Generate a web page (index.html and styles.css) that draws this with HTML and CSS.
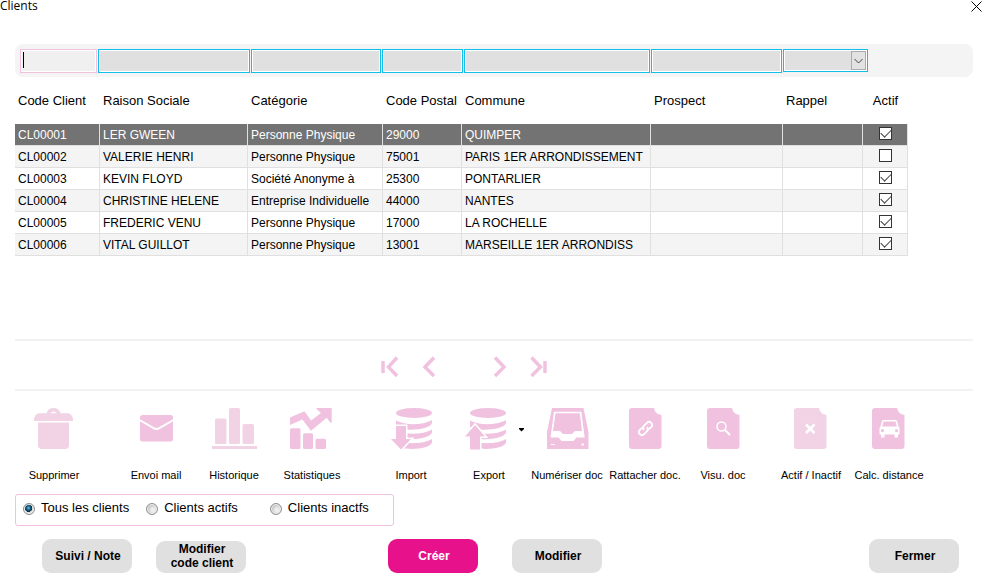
FILE: index.html
```html
<!DOCTYPE html>
<html lang="fr">
<head>
<meta charset="utf-8">
<title>Clients</title>
<link rel="stylesheet" href="styles.css">
</head>
<body>
<svg class="defs" aria-hidden="true">
  <symbol id="doc" viewBox="0 0 42 42"><path d="M8 0H30Q31 6 37.500 7V38Q37.500 41 34.500 41H8Q5 41 5 38V3Q5 0 8 0Z"/></symbol>
  <symbol id="discs" viewBox="0 0 42 42">
    <ellipse cx="24" cy="5" rx="18" ry="5"/>
    <path d="M6 12.500C15 17.500 33 17.500 42 12V15C40 22.500 13 23.500 6 19Z"/>
    <path d="M6 22C15 27 33 27 42 21.500V24.500C40 32 13 33 6 28.500Z"/>
    <path d="M6 31.500C15 36.500 33 36.500 42 31V34.500C40 42 13 42.500 6 38Z"/>
  </symbol>
</svg>

<header class="titlebar">
  <h1>Clients</h1>
  <button class="close" type="button" aria-label="Quitter"><svg width="11" height="11" viewBox="0 0 11 11"><path d="M.5 .5L10.500 10.500M10.500 .5L.5 10.500"/></svg></button>
</header>

<main>
  <form class="filters">
    <span class="field current"><input type="text" aria-label="Code Client"></span>
    <span class="field"><input type="text" aria-label="Raison Sociale"></span>
    <span class="field"><input type="text" aria-label="Catégorie"></span>
    <span class="field"><input type="text" aria-label="Code Postal"></span>
    <span class="field"><input type="text" aria-label="Commune"></span>
    <span class="field"><input type="text" aria-label="Prospect"></span>
    <span class="field choice"><select aria-label="Rappel"><option></option></select><svg width="15" height="19" viewBox="0 0 15 19"><rect x=".5" y=".5" width="14" height="18"/><path d="M3.500 8L7.500 12L11.500 8"/></svg></span>
  </form>

  <div class="list">
    <table>
      <colgroup><col class="code"><col class="name"><col class="category"><col class="postal"><col class="town"><col class="prospect"><col class="reminder"><col class="active"></colgroup>
      <thead><tr><th>Code Client</th><th>Raison Sociale</th><th>Catégorie</th><th>Code Postal</th><th>Commune</th><th>Prospect</th><th>Rappel</th><th>Actif</th></tr></thead>
      <tbody>
        <tr class="selected"><td>CL00001</td><td>LER GWEEN</td><td>Personne Physique</td><td>29000</td><td>QUIMPER</td><td></td><td></td><td><input type="checkbox" aria-label="Actif CL00001" checked></td></tr>
        <tr><td>CL00002</td><td>VALERIE HENRI</td><td>Personne Physique</td><td>75001</td><td>PARIS 1ER ARRONDISSEMENT</td><td></td><td></td><td><input type="checkbox" aria-label="Actif CL00002"></td></tr>
        <tr><td>CL00003</td><td>KEVIN FLOYD</td><td>Société Anonyme à</td><td>25300</td><td>PONTARLIER</td><td></td><td></td><td><input type="checkbox" aria-label="Actif CL00003" checked></td></tr>
        <tr><td>CL00004</td><td>CHRISTINE HELENE</td><td>Entreprise Individuelle</td><td>44000</td><td>NANTES</td><td></td><td></td><td><input type="checkbox" aria-label="Actif CL00004" checked></td></tr>
        <tr><td>CL00005</td><td>FREDERIC VENU</td><td>Personne Physique</td><td>17000</td><td>LA ROCHELLE</td><td></td><td></td><td><input type="checkbox" aria-label="Actif CL00005" checked></td></tr>
        <tr><td>CL00006</td><td>VITAL GUILLOT</td><td>Personne Physique</td><td>13001</td><td>MARSEILLE 1ER ARRONDISS</td><td></td><td></td><td><input type="checkbox" aria-label="Actif CL00006" checked></td></tr>
      </tbody>
    </table>
  </div>

  <nav class="pager" aria-label="Navigation">
    <button type="button" aria-label="Premier"><svg width="18" height="22" viewBox="0 0 18 22"><path d="M2 5V17M16 1.500L7.500 11L16 20"/></svg></button>
    <button type="button" aria-label="Précédent"><svg width="18" height="22" viewBox="0 0 18 22"><path d="M14 1.500L5 11L14 20"/></svg></button>
    <button class="next" type="button" aria-label="Suivant"><svg width="18" height="22" viewBox="0 0 18 22"><path d="M4 1.500L13 11L4 20"/></svg></button>
    <button type="button" aria-label="Dernier"><svg width="18" height="22" viewBox="0 0 18 22"><path d="M1.500 1.500L10.500 11L1.500 20M15 5V17"/></svg></button>
  </nav>

  <div class="toolbar">
    <div class="tools">
      <button class="off" type="button"><svg viewBox="0 0 42 42"><path d="M1 13V11Q2 5.300 7 5.300H13.500Q15 0 20.500 0Q26 0 27.500 5.300H34Q39 5.300 40 11V13Z"/><path class="cut" d="M17 5.300Q20.500 1.500 24 5.300Z"/><path d="M5 14.500H36V37Q36 41 32 41H9Q5 41 5 37Z"/></svg>Supprimer</button>
    </div>
    <div class="tools">
      <button type="button"><svg viewBox="0 0 42 42"><rect x="5" y="7" width="33" height="26.500" rx="2.500"/><path class="line" d="M4.500 12L19.500 20.500Q21.500 21.500 23.500 20.500L38.500 12"/></svg>Envoi mail</button>
      <button class="off" type="button"><svg viewBox="0 0 42 42"><rect x="2" y="10.500" width="11.500" height="25.500" rx="1.500"/><rect x="16" y="0" width="11" height="36" rx="1.500"/><rect x="29.500" y="16" width="11.500" height="20" rx="1.500"/><path d="M-1 38H44V41H-1Z"/></svg>Historique</button>
      <button type="button"><svg viewBox="0 0 42 42"><path d="M-1 9.500L13.500 3.300L20 12.500L30 5L25.500 1V0H40.700V14.700H39.500L35.700 9.700L20 22.700L11.300 11.500L-1 17Z"/><rect x="-1" y="20.300" width="10.500" height="20.700" rx="1.500"/><rect x="12" y="25.300" width="10" height="15.700" rx="1.500"/><rect x="24.500" y="30.700" width="10.500" height="10.300" rx="1.500"/></svg>Statistiques</button>
    </div>
    <div class="tools">
      <button type="button"><svg viewBox="0 0 42 42"><use href="#discs" width="42" height="42"/><path class="edge" d="M6 18H16V31H21L11 41.500L1 31H6Z"/></svg>Import</button>
      <button type="button"><svg viewBox="0 0 42 42"><use href="#discs" x="-4" width="42" height="42"/><path class="edge" d="M7 17L17 28.500H12V41.500H2V28.500H-3Z"/><path class="arrow" d="M51 20H56V21L53.500 23.500L51 21Z"/></svg>Export</button>
      <button type="button"><svg viewBox="0 0 42 42"><path d="M6 0H37.500L42.500 24V41H1V24Z"/><path class="cut" d="M8 3.700H35.300L38.700 29.500H30.500L27.500 33H15.500L12.500 29.500H4.500Z"/><path d="M9.500 5.200H33.800L36 23H29L26 26H17L14 23H7Z"/><path class="cut" d="M5 36H9V37H5ZM35.500 35.500H38V37.500H35.500Z"/></svg>Numériser doc</button>
      <button type="button"><svg viewBox="0 0 42 42"><use href="#doc" width="42" height="42"/><g class="link" transform="rotate(-45 21.500 20.500)"><path d="M19.500 17.500H16.500Q13.500 17.500 13.500 20.500Q13.500 23.500 16.500 23.500H20.500Q23.500 23.500 23.500 20.500M23.500 23.500H26.500Q29.500 23.500 29.500 20.500Q29.500 17.500 26.500 17.500H22.500Q19.500 17.500 19.500 20.500"/></g></svg>Rattacher doc.</button>
      <button type="button"><svg viewBox="0 0 42 42"><use href="#doc" width="42" height="42"/><circle class="thin" cx="19.500" cy="18.500" r="4.500"/><path class="line" d="M23 22L28 27"/></svg>Visu. doc</button>
    </div>
    <div class="tools">
      <button class="off" type="button"><svg viewBox="0 0 42 42"><use href="#doc" x="-1" width="42" height="42"/><path class="cross" d="M16 16.500L24.500 25M24.500 16.500L16 25"/></svg>Actif / Inactif</button>
      <button type="button"><svg viewBox="0 0 42 42"><use href="#doc" x="-1" width="42" height="42"/><path class="cut" fill-rule="evenodd" d="M15.500 12H27.500Q28.500 12 29 13L30.500 18.500Q31.500 19 31.500 20.500V26.500H30V29.500H26.500V26.500H16.500V29.500H13V26.500H11.500V20.500Q11.500 19 12.500 18.500L14 13Q14.500 12 15.500 12ZM15.500 13.500L14.200 18.500H28.800L27.500 13.500ZM14.500 21A1.600 1.600 0 1 0 14.500 24.200A1.600 1.600 0 1 0 14.500 21ZM28.500 21A1.600 1.600 0 1 0 28.500 24.200A1.600 1.600 0 1 0 28.500 21Z"/></svg>Calc. distance</button>
    </div>
  </div>

  <fieldset class="scope" aria-label="Clients affichés">
    <label><input type="radio" name="scope" checked>Tous les clients</label>
    <label><input type="radio" name="scope">Clients actifs</label>
    <label><input type="radio" name="scope">Clients inactfs</label>
  </fieldset>
</main>

<footer class="actions">
  <button type="button">Suivi / Note</button>
  <button class="two-lines" type="button">Modifier<br>code client</button>
  <button class="create" type="button">Créer</button>
  <button class="edit" type="button">Modifier</button>
  <button class="leave" type="button">Fermer</button>
</footer>
</body>
</html>
```
FILE: styles.css
```css
:root {
  --pink: #f0c2df;
  --pink-off: #f1d3e5;
  --blue: #0fc0ea;
  --grey: #e0e0e0;
  --pale: #f4f4f4;
}
* { box-sizing: border-box; }
body {
  margin: 0;
  min-height: 100vh;
  display: flex;
  flex-direction: column;
  background: #fff;
  color: #000;
  font: 13px/16px "Liberation Sans", Arial, sans-serif;
}
button, input, select { font: inherit; color: inherit; }
button { padding: 0; border: 0; background: none; }
svg { display: block; }
.defs { position: absolute; width: 0; height: 0; }

.titlebar {
  display: flex;
  justify-content: space-between;
  align-items: flex-start;
  height: 44px;
  padding-right: 6px;
}
h1 { margin: 0; font: 12px/12px "Open Sans", "Noto Sans", sans-serif; }
.close { padding-top: 1px; }
.close path { stroke: #000; fill: none; }

main {
  flex: 1;
  display: flex;
  flex-direction: column;
  margin: 0 15px;
}

.filters {
  display: grid;
  grid-template-columns: 77px 152px 130px 81px 186px 131px 85px;
  gap: 1px;
  padding: 5px 5px 4px;
  border-radius: 8px;
  background: var(--pale);
}
.field { position: relative; display: flex; height: 24px; }
.field input, .field select {
  width: 100%;
  height: 100%;
  margin: 0;
  padding: 0 4px;
  border: 1px solid var(--blue);
  border-radius: 0;
  outline: 0;
  background: var(--grey);
  box-shadow: inset 0 0 0 1px #fff;
  appearance: none;
}
.current input { border-color: var(--pink); background: #f0f0f0; }
.current::after {
  content: "";
  position: absolute;
  left: 3px;
  top: 3px;
  width: 1px;
  height: 16px;
  background: #000;
}
.choice { height: 23px; }
.choice svg { position: absolute; right: 2px; top: 2px; pointer-events: none; }
.choice rect { fill: #e2e2e2; stroke: #acacac; }
.choice path { fill: none; stroke: #444; }

.list { flex: 1; }
table { table-layout: fixed; width: 893px; border-collapse: separate; border-spacing: 0; }
.code { width: 85px; }
.name { width: 148px; }
.category { width: 135px; }
.postal { width: 79px; }
.town { width: 189px; }
.prospect { width: 132px; }
.reminder { width: 80px; }
.active { width: 45px; }
th, td { padding: 0 3px; text-align: left; white-space: nowrap; }
th { height: 47px; font-weight: 400; }
td {
  height: 22px;
  border-right: 1px solid var(--grey);
  border-bottom: 1px solid var(--grey);
  font-size: 12px;
  overflow: hidden;
}
th:last-child, td:last-child { text-align: center; }
tbody tr:nth-child(even) { background: var(--pale); }
tbody .selected { background: #737373; color: #fff; }
td input {
  display: block;
  width: 13px;
  height: 13px;
  margin: 0 auto 2px;
  border: 1px solid #333;
  background: #fff;
  appearance: none;
}
td input:checked::before {
  content: "";
  display: block;
  width: 9px;
  height: 5px;
  margin: 2px 0 0 1px;
  border: solid #444;
  border-width: 0 0 1px 1px;
  transform: translateY(-1px) rotate(-45deg);
}

.pager {
  display: flex;
  align-items: center;
  gap: 21px;
  height: 52px;
  padding: 3px 0 0 366px;
  border-top: 2px solid #f2f2f2;
  border-bottom: 2px solid #f2f2f2;
}
.pager .next { margin-left: 32px; }
.pager path { fill: none; stroke: var(--pink); stroke-width: 3.500; }

.toolbar { display: flex; padding: 17px 0 11px; }
.tools { display: flex; }
.tools:nth-child(2) { margin-left: 24px; }
.tools:nth-child(3) { margin-left: 21px; }
.tools:nth-child(4) { margin-left: 10px; }
.tools button {
  display: flex;
  flex-direction: column;
  align-items: center;
  gap: 17px;
  width: 78px;
  font-size: 11px;
  white-space: nowrap;
}
.tools svg { width: 42px; height: 42px; overflow: visible; fill: var(--pink); }
.tools .off svg { fill: var(--pink-off); }
.tools .cut { fill: #fff; }
.tools .line { fill: none; stroke: #fff; stroke-width: 2; }
.tools .thin { fill: none; stroke: #fff; stroke-width: 1.500; }
.tools .link { fill: none; stroke: #fff; stroke-width: 1.800; }
.tools .cross { fill: none; stroke: #fff; stroke-width: 2.500; }
.tools .edge { stroke: #fff; stroke-width: 3; paint-order: stroke; }
.tools .arrow { fill: #000; }

.scope {
  display: flex;
  align-self: flex-start;
  gap: 17px;
  width: 379px;
  height: 32px;
  margin: 0;
  padding: 5px 7px;
  border: 1px solid var(--pink);
  border-radius: 3px;
}
.scope label { display: flex; align-items: flex-start; gap: 6px; }
.scope label:nth-child(3) { margin-left: 15px; }
.scope input {
  width: 12px;
  height: 12px;
  margin: 3px 0 0;
  border: 1px solid #8e8f8f;
  border-radius: 50%;
  background: radial-gradient(circle at 60% 60%, #eee 20%, #bbb 70%);
  box-shadow: inset 0 0 0 1px #f4f4f4;
  appearance: none;
}
.scope input:checked {
  background: radial-gradient(circle at 45% 40%, #7cc8ec 0, #12597f 25%, #0b2f45 45%, #ddd 50%);
}

.actions { display: flex; padding: 13px 29px 6px 42px; align-items: flex-end; }
.actions button {
  width: 90px;
  height: 34px;
  padding-left: 2px;
  border-radius: 9px;
  background: var(--grey);
  font-weight: 700;
  font-size: 12px;
  line-height: 14px;
}
.actions .two-lines { height: 32px; padding-bottom: 2px; margin-left: 24px; }
.actions .create { margin-left: 142px; background: #e8118c; color: #fff; }
.actions .edit { margin-left: 34px; }
.actions .leave { margin-left: auto; }
```
